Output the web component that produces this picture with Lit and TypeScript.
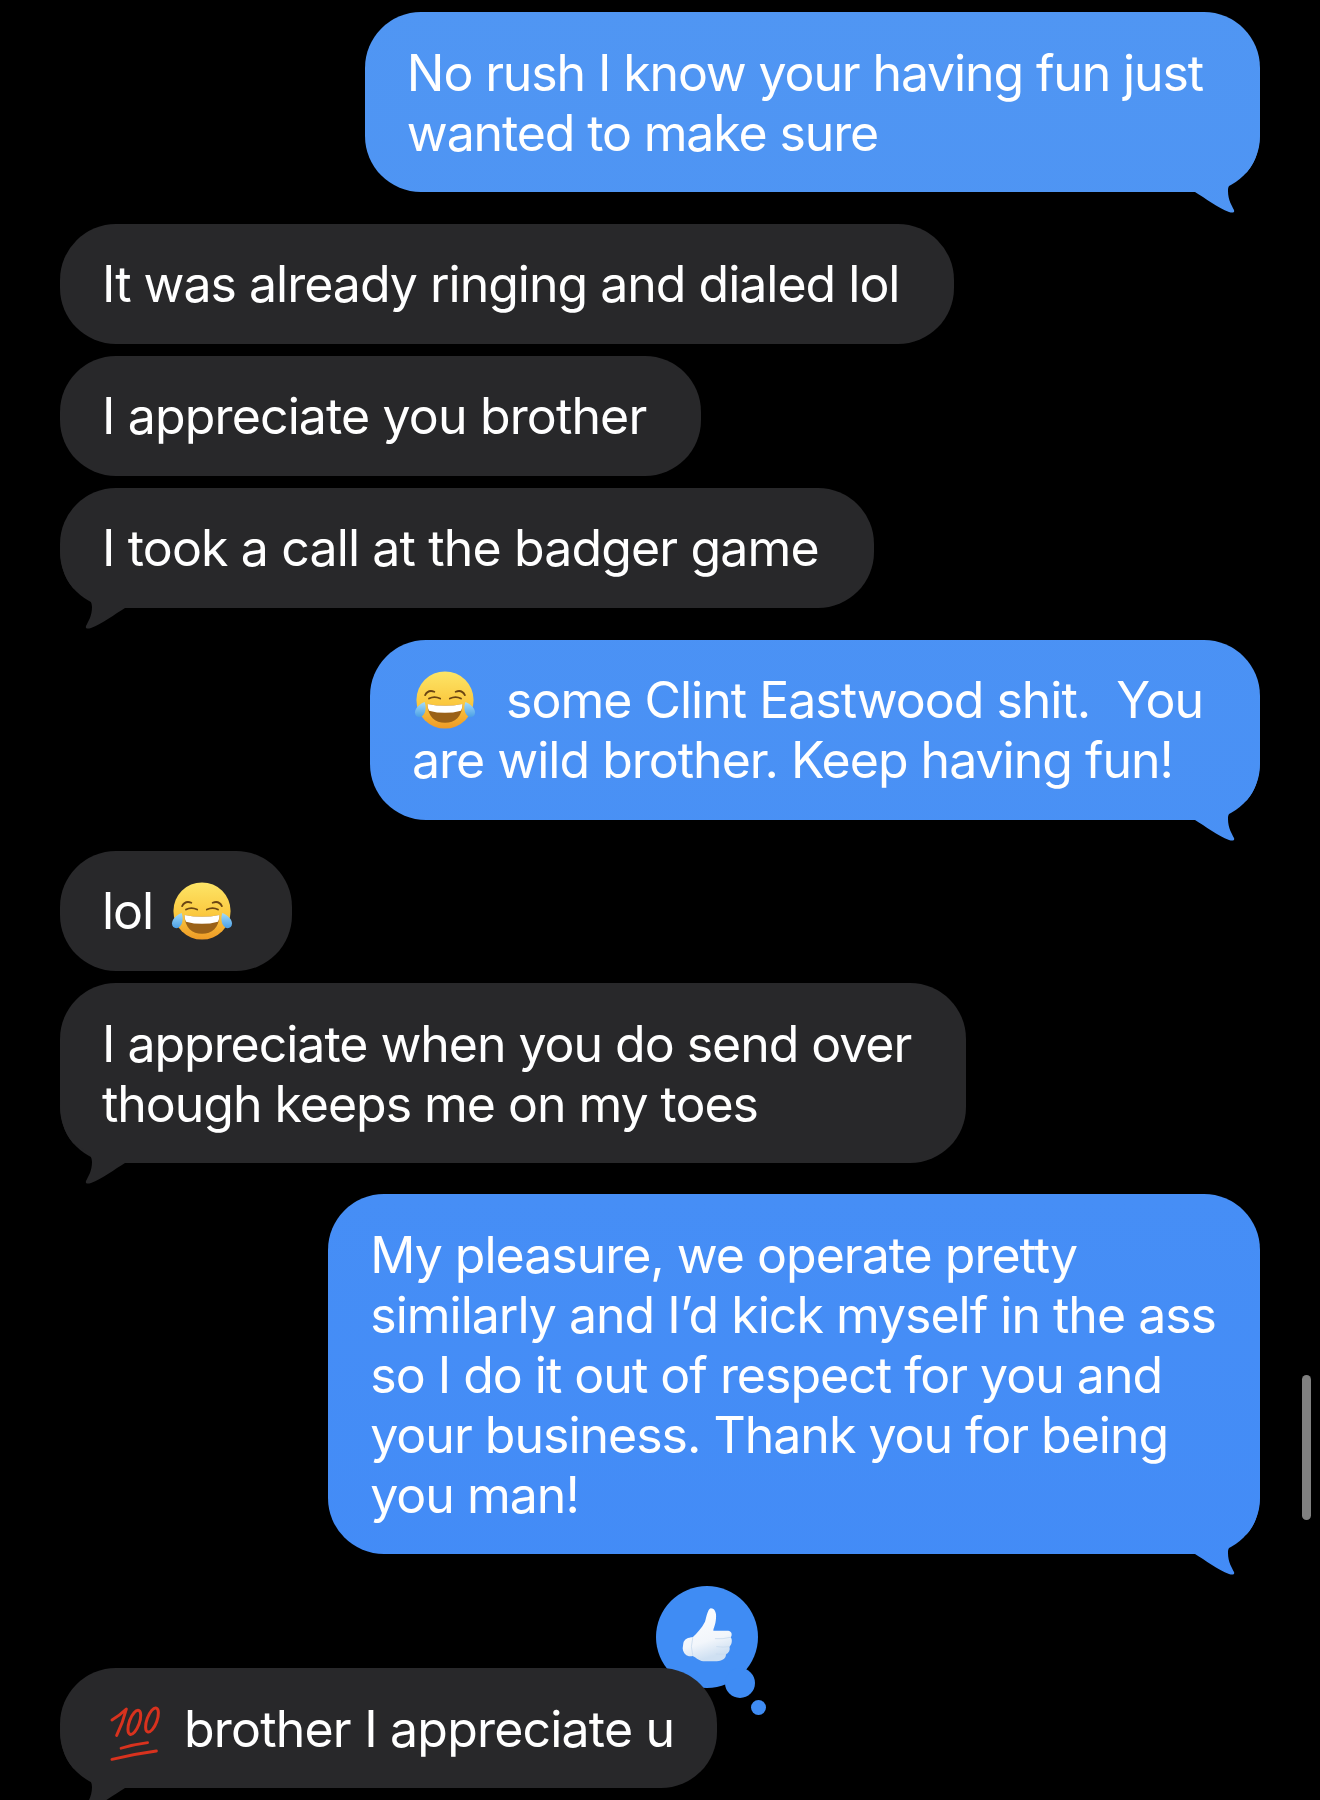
import { LitElement, html, css, svg } from 'lit';
import { customElement } from 'lit/decorators.js';

const tearsEmoji = html`<svg class="emoji laugh" viewBox="0 0 64 64">
  <defs>
    <linearGradient id="face" x1="0" y1="0" x2="0" y2="1">
      <stop offset="0" stop-color="#fde567" />
      <stop offset="0.55" stop-color="#fbc940" />
      <stop offset="1" stop-color="#ee9a26" />
    </linearGradient>
    <linearGradient id="tear" x1="0" y1="0" x2="0" y2="1">
      <stop offset="0" stop-color="#a4dcf8" />
      <stop offset="1" stop-color="#4a9fe6" />
    </linearGradient>
  </defs>
  <circle cx="32" cy="32" r="29.5" fill="url(#face)" />
  <path d="M14 36Q32 40 50 36C50 49 42 55.5 32 55.5C22 55.5 14 49 14 36Z" fill="#9a6118" />
  <path d="M14 36Q32 40 50 36Q50 40 48.5 43Q32 47.5 15.5 43Q14 40 14 36Z" fill="#fff" />
  <g fill="none" stroke="#6b4513" stroke-width="1.9" stroke-linecap="round">
    <path d="M11.5 27Q14.5 21 21 23.5" />
    <path d="M15.5 30.5Q21 27.5 27 30.5" />
    <path d="M52.5 27Q49.5 21 43 23.5" />
    <path d="M48.5 30.5Q43 27.5 37 30.5" />
  </g>
  <path d="M11 34C13 40 12 46 8 49C5 51 1 49 1 45C1 40 6 36 11 34Z" fill="url(#tear)" />
  <path d="M53 34C51 40 52 46 56 49C59 51 63 49 63 45C63 40 58 36 53 34Z" fill="url(#tear)" />
</svg>`;

const hundredEmoji = html`<svg class="emoji hundred" viewBox="0 0 210 210">
  <g fill="none" stroke="#d8321e" stroke-linecap="round" stroke-linejoin="round">
    <g stroke-width="9">
      <path d="M39 78Q60 66 82 45Q72 85 53 124" />
      <ellipse cx="106" cy="85" rx="15" ry="38" transform="rotate(20 106 85)" />
      <ellipse cx="159" cy="78" rx="15" ry="38" transform="rotate(20 159 78)" />
    </g>
    <path d="M66 163Q105 151 146 146" stroke-width="8" />
    <path d="M39 196Q105 180 172 171" stroke-width="9" />
  </g>
</svg>`;

const thumbIcon = svg`
  <defs>
    <linearGradient id="hand" x1="0" y1="0" x2="0.3" y2="1">
      <stop offset="0" stop-color="#ffffff" />
      <stop offset="0.7" stop-color="#f2f6fb" />
      <stop offset="1" stop-color="#cfe0f2" />
    </linearGradient>
  </defs>
  <path d="M40 130C42 118 55 112 68 112C80 100 95 85 105 65C110 50 112 30 122 25C135 25 140 40 138 55C137 75 130 85 130 92L175 92C188 94 186 108 182 112C188 118 186 135 178 140C182 150 175 160 168 162C168 175 160 182 140 184L100 184C85 182 75 170 68 168C55 172 40 165 38 145Z" fill="url(#hand)" />
  <g fill="none" stroke="#c9dbee" stroke-width="2.5" stroke-linecap="round">
    <path d="M136 116Q160 118 181 112" />
    <path d="M140 140Q160 143 178 140" />
    <path d="M138 162Q155 164 168 162" />
    <path d="M68 114Q60 140 68 166" />
  </g>
`;

// gap = space above, top/right = padding, track = letter-spacing (the fallback font runs a bit different per line)
type Msg = {
  from: 'me' | 'them';
  lines: unknown[];
  gap: number;
  tail?: boolean;
  reaction?: boolean;
  top?: number;
  right?: number;
  track?: number;
};

const messages: Msg[] = [
  { from: 'me', gap: 0, tail: true, top: 31, right: 57, track: -1.13, lines: ['No rush I know your having fun just', 'wanted to make sure'] },
  { from: 'them', gap: 32, lines: ['It was already ringing and dialed lol'] },
  { from: 'them', gap: 12, track: -0.86, lines: ['I appreciate you brother'] },
  { from: 'them', gap: 12, tail: true, track: -0.86, lines: ['I took a call at the badger game'] },
  {
    from: 'me',
    gap: 32,
    tail: true,
    right: 57,
    lines: [html`<span class="lead-tears">${tearsEmoji}</span><span class="after-tears">some Clint Eastwood shit.  You</span>`, 'are wild brother. Keep having fun!'],
  },
  { from: 'them', gap: 31, right: 59, lines: [html`lol<span class="after-lol">${tearsEmoji}</span>`] },
  { from: 'them', gap: 12, tail: true, top: 31, track: -1.03, lines: ['I appreciate when you do send over', 'though keeps me on my toes'] },
  {
    from: 'me',
    gap: 31,
    tail: true,
    top: 31,
    right: 44,
    lines: [
      'My pleasure, we operate pretty',
      'similarly and I’d kick myself in the ass',
      'so I do it out of respect for you and',
      'your business. Thank you for being',
      'you man!',
    ],
  },
  {
    from: 'them',
    gap: 114,
    tail: true,
    reaction: true,
    top: 31,
    right: 43,
    track: -0.8,
    lines: [html`${hundredEmoji}<span>brother I appreciate u</span>`],
  },
];

@customElement('app-root')
export class AppRoot extends LitElement {
  static styles = css`
    :host {
      display: block;
    }

    .screen {
      position: relative;
      z-index: 0;
      display: flex;
      flex-direction: column;
      height: 1800px;
      padding: 12px 60px 0;
      box-sizing: border-box;
      overflow: hidden;
      background: #000;
      font-family: Inter, 'Liberation Sans', sans-serif;
      font-size: 50px;
      color: #fff;
    }

    .bubble {
      position: relative;
      flex: none;
      width: fit-content;
      padding-left: 42px;
      border-radius: 56px;
    }

    .me {
      align-self: flex-end;
      background: linear-gradient(#5096f3 0, #418af7 1800px) fixed;
    }

    .them {
      align-self: flex-start;
      background: #28282a;
    }

    /* tail sits over the rounded bottom corner */
    .tail::after {
      content: '';
      position: absolute;
      right: 0;
      bottom: -22px;
      width: 70px;
      height: 86px;
      background: inherit;
      clip-path: path('M70 0C70 20 66 34 57 44C50 50 38 52 38 63C38 72 42 78 44 82C45 85 42 85 39 84C28 80 15 70 5 64L0 64L0 0Z');
    }

    .them.tail::after {
      right: auto;
      left: 0;
      transform: scaleX(-1);
    }

    .line {
      position: relative;
      z-index: 1;
      display: flex;
      align-items: center;
      height: 60px;
      white-space: pre;
    }

    .emoji {
      flex: none;
      display: block;
    }

    .laugh {
      width: 62px;
      height: 62px;
    }

    .hundred {
      width: 70px;
      height: 70px;
      margin: 0 15px 0 -3px;
    }

    .lead-tears {
      margin-left: 2px;
    }

    .after-tears {
      margin-left: 30px;
    }

    .after-lol {
      margin-left: 18px;
    }

    .reaction {
      position: absolute;
      top: -82px;
      right: -41px;
      z-index: -1;
      width: 102px;
      height: 102px;
      border-radius: 50%;
      background: #3f8cf4;
    }

    .reaction svg {
      display: block;
      width: 80px;
      height: 70px;
      margin: 14px 0 0 14px;
    }

    .reaction::before,
    .reaction::after {
      content: '';
      position: absolute;
      border-radius: 50%;
      background: inherit;
    }

    .reaction::before {
      left: 69px;
      top: 82px;
      width: 30px;
      height: 30px;
    }

    .reaction::after {
      left: 95px;
      top: 114px;
      width: 15px;
      height: 15px;
    }

    .scrollbar {
      position: absolute;
      top: 1375px;
      left: 1302px;
      width: 9px;
      height: 145px;
      border-radius: 5px;
      background: #808080;
    }
  `;

  override render() {
    return html`
      <div class="screen">
        ${messages.map((m) => {
          const top = m.top ?? 30;
          const box = `margin-top:${m.gap}px;padding-top:${top}px;padding-bottom:${60 - top}px;padding-right:${m.right ?? 55}px;letter-spacing:${m.track ?? -1}px`;
          return html`
            <div class="bubble ${m.from} ${m.tail ? 'tail' : ''}" style=${box}>
              ${m.reaction ? html`<div class="reaction"><svg viewBox="0 0 240 210">${thumbIcon}</svg></div>` : ''}
              ${m.lines.map((l) => html`<div class="line">${l}</div>`)}
            </div>
          `;
        })}
        <div class="scrollbar"></div>
      </div>
    `;
  }
}
